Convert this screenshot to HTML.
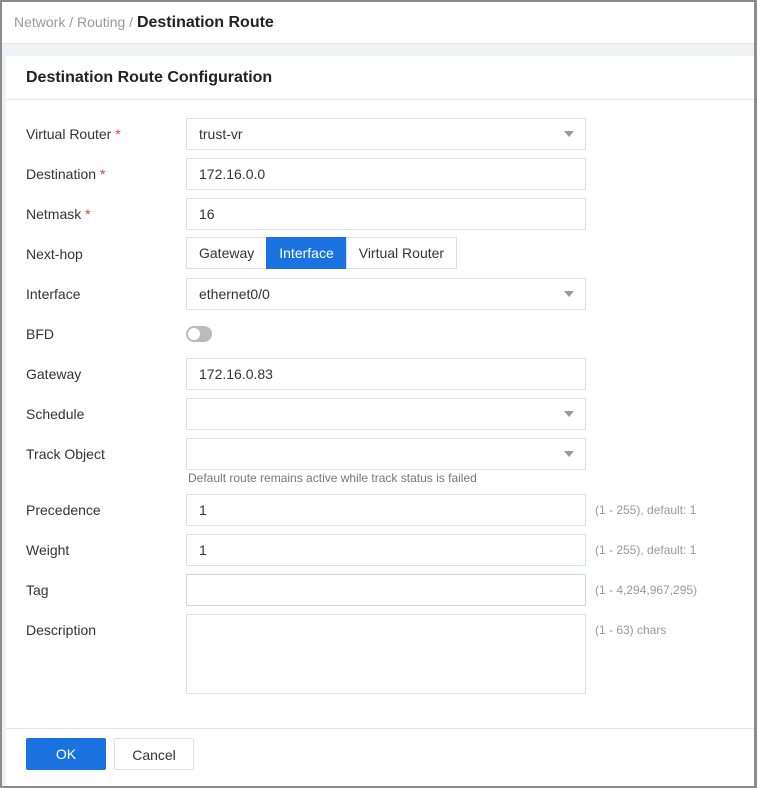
<!DOCTYPE html>
<html><head><meta charset="utf-8"><style>
*{box-sizing:border-box;margin:0;padding:0}
html,body{width:757px;height:788px;overflow:hidden;background:#fff;font-family:"Liberation Sans",Arial,sans-serif;font-size:14px;color:#333}
.frame{position:absolute;left:0;top:0;width:757px;height:788px;border:2px solid #8c8c8c;border-right-width:3px;background:#f0f1f5}
.hdr{position:absolute;left:0;top:0;right:0;height:42px;background:#fff;border-bottom:1px solid #e4e6eb}
.bc{position:absolute;left:12px;top:12px;font-size:14px;color:#999}
.bc b{color:#222;font-size:16px}
.card{position:absolute;left:4px;top:54px;right:0;bottom:0;background:#fff}
.title{position:absolute;left:0;right:0;top:0;height:44px;border-bottom:1px solid #e4e6eb;padding:13px 0 0 20px;font-weight:bold;font-size:16px;color:#222}
.lbl{position:absolute;left:20px;font-size:14px;color:#333}
.lbl i{color:#e33;font-style:normal}
.in{position:absolute;left:180px;width:400px;height:32px;border:1px solid #dcdfe6;padding:7px 12px;font-size:14px;color:#333}
.in.sel::after{content:"";position:absolute;right:11px;top:12px;border-left:5px solid transparent;border-right:5px solid transparent;border-top:6px solid #999}
.hint{position:absolute;left:589px;font-size:12px;color:#999}
.seg{position:absolute;left:180px;top:181px;height:32px;display:flex}
.seg div{border:1px solid #dcdfe6;padding:7px 12px;font-size:14px;margin-right:-1px}
.seg .on{background:#1a73e0;border-color:#1a73e0;color:#fff}
.tg{position:absolute;left:180px;top:270px;width:26px;height:16px;border-radius:8px;background:#bbb}
.tg::after{content:"";position:absolute;left:2px;top:2px;width:12px;height:12px;border-radius:50%;background:#fff}
.foot{position:absolute;left:0;right:0;top:672px;border-top:1px solid #e4e6eb}
.btn{position:absolute;top:682px;height:32px;width:80px;border-radius:2px;text-align:center;padding-top:8px;font-size:14px}
</style></head><body><div class="frame">
<div class="hdr"><div class="bc">Network / Routing / <b>Destination Route</b></div></div>
<div class="card">
<div class="title">Destination Route Configuration</div>
<div class="lbl" style="top:70px">Virtual Router <i>*</i></div><div class="in sel" style="top:62px">trust-vr</div>
<div class="lbl" style="top:110px">Destination <i>*</i></div><div class="in" style="top:102px">172.16.0.0</div>
<div class="lbl" style="top:150px">Netmask <i>*</i></div><div class="in" style="top:142px">16</div>
<div class="lbl" style="top:190px">Next-hop</div>
<div class="seg"><div>Gateway</div><div class="on">Interface</div><div>Virtual Router</div></div>
<div class="lbl" style="top:230px">Interface</div><div class="in sel" style="top:222px">ethernet0/0</div>
<div class="lbl" style="top:270px">BFD</div><div class="tg"></div>
<div class="lbl" style="top:310px">Gateway</div><div class="in" style="top:302px">172.16.0.83</div>
<div class="lbl" style="top:350px">Schedule</div><div class="in sel" style="top:342px"></div>
<div class="lbl" style="top:390px">Track Object</div><div class="in sel" style="top:382px"></div>
<div style="position:absolute;left:182px;top:415px;font-size:12px;color:#777">Default route remains active while track status is failed</div>
<div class="lbl" style="top:446px">Precedence</div><div class="in" style="top:438px">1</div><div class="hint" style="top:447px">(1 - 255), default: 1</div>
<div class="lbl" style="top:486px">Weight</div><div class="in" style="top:478px">1</div><div class="hint" style="top:487px">(1 - 255), default: 1</div>
<div class="lbl" style="top:526px">Tag</div><div class="in" style="top:518px;border-color:#c8d6e8"></div><div class="hint" style="top:527px">(1 - 4,294,967,295)</div>
<div class="lbl" style="top:566px">Description</div><div class="in" style="top:558px;height:80px"></div><div class="hint" style="top:567px">(1 - 63) chars</div>
<div class="foot"></div>
<div class="btn" style="left:20px;background:#1a73e0;color:#fff">OK</div>
<div class="btn" style="left:108px;border:1px solid #dcdfe6;color:#333">Cancel</div>
</div></div></body></html>
